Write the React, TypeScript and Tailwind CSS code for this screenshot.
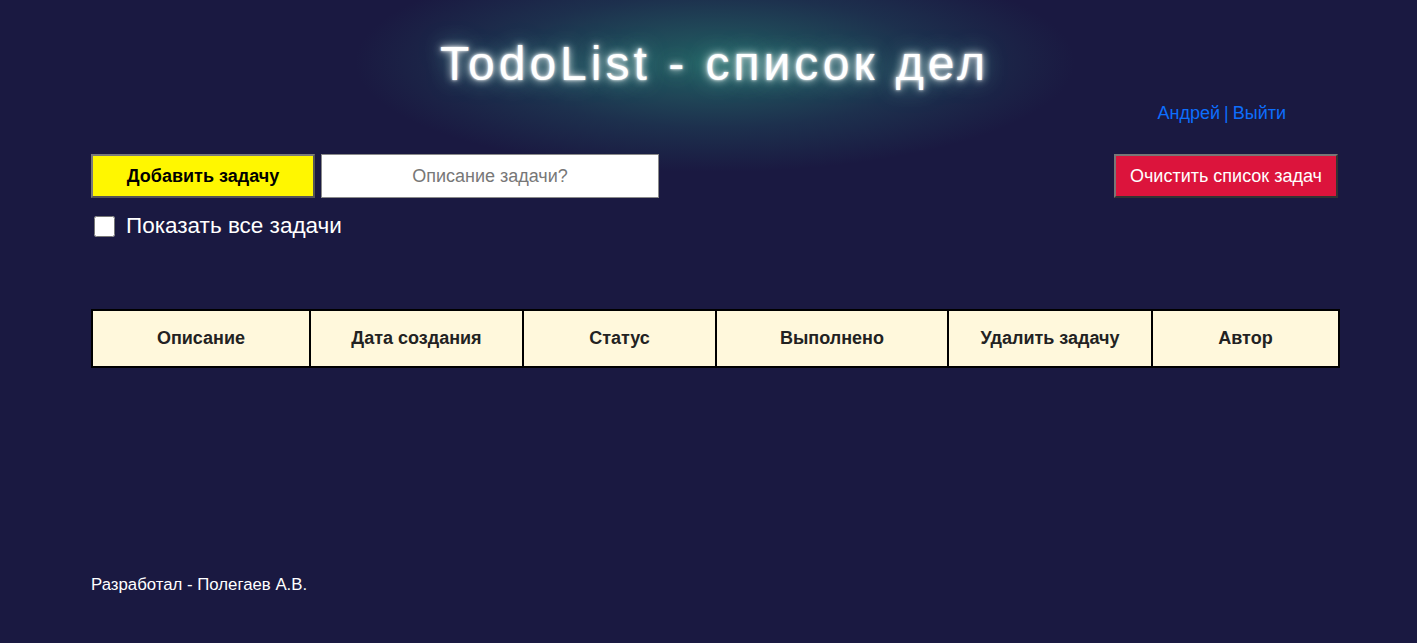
export default function App() {
  const cols = [
    { t: 'Описание', w: 'w-[218px]' },
    { t: 'Дата создания', w: 'w-[213px]' },
    { t: 'Статус', w: 'w-[193px]' },
    { t: 'Выполнено', w: 'w-[232px]' },
    { t: 'Удалить задачу', w: 'w-[204px]' },
    { t: 'Автор', w: 'w-[187px]' },
  ]

  return (
    <div className="min-h-[643px] bg-[#1a1941] font-['Liberation_Sans',Arial,sans-serif] text-white">
      <div className="ml-[91px] w-[1247px] flex flex-col">
        <div className="flex flex-col bg-[radial-gradient(ellipse_360px_110px_at_624px_62px,rgba(38,120,110,0.75),rgba(34,90,100,0.35)_60%,transparent)]">
          <h1 className="pt-[36px] text-center text-[48px] leading-[56px] tracking-[4px] font-normal [text-shadow:0_0_3px_#fff,0_0_8px_#fff,0_0_22px_rgba(120,230,210,0.7)]">
            TodoList - список дел
          </h1>
          <div className="flex justify-end pr-[52px] mt-[9px] text-[18px] leading-[24px] text-[#0d6efd]">
            <a href="#">Андрей</a>
            <span className="px-[4px]">|</span>
            <a href="#">Выйти</a>
          </div>
          <div className="flex items-start mt-[29px] pb-[4px]">
            <button className="w-[224px] h-[44px] bg-[#fff700] text-black font-bold text-[18px] border-2 border-[#7a7a7a] border-b-[#555] border-r-[#555]">
              Добавить задачу
            </button>
            <input
              className="ml-[6px] w-[338px] h-[44px] bg-white border border-[#8a8a8a] text-center text-[18px] text-black placeholder:text-[#777]"
              placeholder="Описание задачи?"
            />
            <div className="flex-1" />
            <button className="w-[224px] h-[44px] bg-[#dc143c] text-white text-[18px] border-2 border-[#777] border-b-[#333] border-r-[#333]">
              Очистить список задач
            </button>
          </div>
        </div>
        <label className="flex items-center mt-[11px] ml-[3px] text-[22.5px] leading-[26px]">
          <input type="checkbox" className="w-[21px] h-[21px] mr-[11px] accent-white" />
          Показать все задачи
        </label>
        <table className="mt-[70px] border-collapse bg-[#fff8dc] text-[#222] table-fixed w-[1247px]">
          <thead>
            <tr>
              {cols.map((c) => (
                <th key={c.t} className={`${c.w} h-[57px] border-2 border-black text-[18px] font-bold text-center`}>
                  {c.t}
                </th>
              ))}
            </tr>
          </thead>
        </table>
        <footer className="mt-[207px] text-[16.8px] leading-[20px]">Разработал - Полегаев А.В.</footer>
      </div>
    </div>
  )
}
